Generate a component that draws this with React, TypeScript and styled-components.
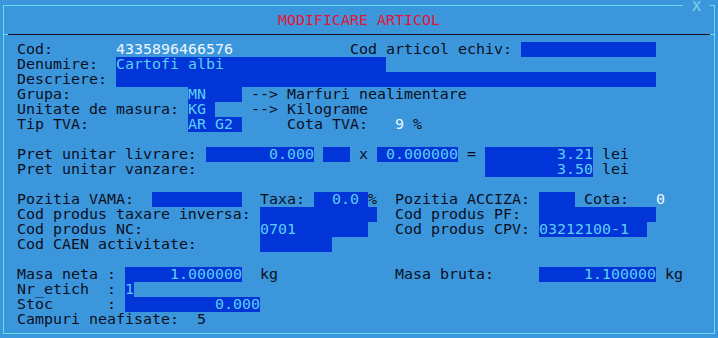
import styled, { createGlobalStyle } from "styled-components"

// one text cell of the old console screen
const CELL = 9

type Kind = "label" | "field" | "value"

type Part = {
    at: number
    text: string
    w?: number
    kind?: Kind
    right?: boolean
}

const rows: Part[][] = [
    [
        { at: 0, text: "Cod:" },
        { at: 11, text: "4335896466576", kind: "value" },
        { at: 37, text: "Cod articol echiv:" },
        { at: 56, text: "", w: 15, kind: "field" },
    ],
    [
        { at: 0, text: "Denumire:" },
        { at: 11, text: "Cartofi albi", w: 30, kind: "field" },
    ],
    [
        { at: 0, text: "Descriere:" },
        { at: 11, text: "", w: 60, kind: "field" },
    ],
    [
        { at: 0, text: "Grupa:" },
        { at: 19, text: "MN", w: 6, kind: "field" },
        { at: 26, text: "--> Marfuri nealimentare" },
    ],
    [
        { at: 0, text: "Unitate de masura:" },
        { at: 19, text: "KG", w: 3, kind: "field" },
        { at: 26, text: "--> Kilograme" },
    ],
    [
        { at: 0, text: "Tip TVA:" },
        { at: 19, text: "AR G2", w: 6, kind: "field" },
        { at: 30, text: "Cota TVA:" },
        { at: 42, text: "9", kind: "value" },
        { at: 44, text: "%" },
    ],
    [],
    [
        { at: 0, text: "Pret unitar livrare:" },
        { at: 21, text: "0.000", w: 12, kind: "field", right: true },
        { at: 34, text: "", w: 3, kind: "field" },
        { at: 38, text: "x" },
        { at: 40, text: "0.000000", w: 9, kind: "field", right: true },
        { at: 50, text: "=" },
        { at: 52, text: "3.21", w: 12, kind: "field", right: true },
        { at: 65, text: "lei" },
    ],
    [
        { at: 0, text: "Pret unitar vanzare:" },
        { at: 52, text: "3.50", w: 12, kind: "field", right: true },
        { at: 65, text: "lei" },
    ],
    [],
    [
        { at: 0, text: "Pozitia VAMA:" },
        { at: 15, text: "", w: 10, kind: "field" },
        { at: 27, text: "Taxa:" },
        { at: 33, text: "  0.0", w: 6, kind: "field" },
        { at: 39, text: "%" },
        { at: 42, text: "Pozitia ACCIZA:" },
        { at: 58, text: "", w: 4, kind: "field" },
        { at: 63, text: "Cota:" },
        { at: 71, text: "0", kind: "value" },
    ],
    [
        { at: 0, text: "Cod produs taxare inversa:" },
        { at: 27, text: "", w: 13, kind: "field" },
        { at: 42, text: "Cod produs PF:" },
        { at: 58, text: "", w: 13, kind: "field" },
    ],
    [
        { at: 0, text: "Cod produs NC:" },
        { at: 27, text: "0701", w: 12, kind: "field" },
        { at: 42, text: "Cod produs CPV:" },
        { at: 58, text: "03212100-1", w: 12, kind: "field" },
    ],
    [
        { at: 0, text: "Cod CAEN activitate:" },
        { at: 27, text: "", w: 8, kind: "field" },
    ],
    [],
    [
        { at: 0, text: "Masa neta :" },
        { at: 12, text: "1.000000", w: 13, kind: "field", right: true },
        { at: 27, text: "kg" },
        { at: 42, text: "Masa bruta:" },
        { at: 58, text: "1.100000", w: 13, kind: "field", right: true },
        { at: 72, text: "kg" },
    ],
    [
        { at: 0, text: "Nr_etich  :" },
        { at: 12, text: "1", w: 1, kind: "field" },
    ],
    [
        { at: 0, text: "Stoc      :" },
        { at: 12, text: "0.000", w: 15, kind: "field", right: true },
    ],
    [
        { at: 0, text: "Campuri neafisate:" },
        { at: 20, text: "5" },
    ],
]

const colors: Record<Kind, string> = {
    label: "#0b0f1c",
    field: "#5ccff6",
    value: "#eef7ff",
}

const App = () => {
    return (
        <>
            <GlobalStyle />
            <Screen>
                <Frame>
                    <Close>X</Close>
                    <Title>MODIFICARE ARTICOL</Title>
                    <Divider>
                        <Tick />
                        <Rule />
                        <Tick />
                    </Divider>
                    <Body>
                        {rows.map((parts, i) => {
                            let cursor = 0
                            return (
                                <Row key={i}>
                                    {parts.map((p, j) => {
                                        const gap = p.at - cursor
                                        const w = p.w ?? p.text.length
                                        cursor = p.at + w
                                        return (
                                            <Piece key={j}>
                                                {gap > 0 && <Gap $w={gap} />}
                                                <Seg $w={w} $kind={p.kind ?? "label"} $right={!!p.right}>
                                                    {p.text}
                                                </Seg>
                                            </Piece>
                                        )
                                    })}
                                </Row>
                            )
                        })}
                    </Body>
                </Frame>
            </Screen>
        </>
    )
}

const GlobalStyle = createGlobalStyle`
    html, body {
        margin: 0;
        padding: 0;
        background: #3c96dc;
    }
    body {
        font-family: "DejaVu Sans Mono", "Liberation Mono", monospace;
        font-size: 14.95px;
    }
`

const Screen = styled.div`
    width: 718px;
    height: 338px;
    background: #3c96dc;
    padding: 5px 0 0 3px;
    box-sizing: border-box;
`

const Frame = styled.div`
    position: relative;
    width: 712px;
    border: 1px solid #5fe2ee;
    box-sizing: border-box;
    display: flex;
    flex-direction: column;
`

const Close = styled.div`
    position: absolute;
    top: -7px;
    left: 679px;
    width: 27px;
    height: 14px;
    line-height: 14px;
    text-align: center;
    background: #3c96dc;
    color: #7fd3e4;
`

const Title = styled.div`
    margin-top: 7px;
    height: 15px;
    line-height: 15px;
    text-align: center;
    color: #e0173a;
    white-space: pre;
`

const Divider = styled.div`
    margin-top: 6px;
    display: flex;
    height: 1px;
`

const Tick = styled.div`
    width: 4px;
    background: #5fe2ee;
`

const Rule = styled.div`
    flex: 1;
    background: #0c0f18;
`

const Body = styled.div`
    padding: 7px 0 6px 13px;
    display: flex;
    flex-direction: column;
`

const Row = styled.div`
    display: flex;
    height: 15px;
    line-height: 15px;
    white-space: pre;
`

const Piece = styled.span`
    display: flex;
`

const Gap = styled.span<{ $w: number }>`
    width: ${p => p.$w * CELL}px;
    flex: none;
`

const Seg = styled.span<{ $w: number; $kind: Kind; $right: boolean }>`
    width: ${p => p.$w * CELL}px;
    flex: none;
    text-align: ${p => (p.$right ? "right" : "left")};
    color: ${p => colors[p.$kind]};
    background: ${p => (p.$kind === "field" ? "#0235d8" : "transparent")};
`

export default App
